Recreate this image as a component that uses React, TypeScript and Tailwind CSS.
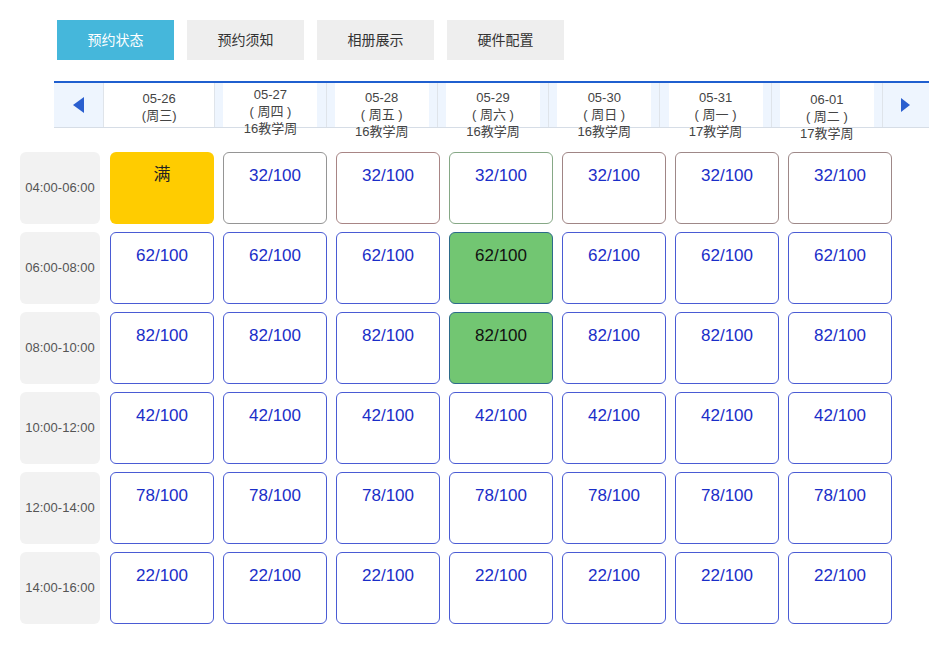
import { clsx } from "clsx";

const font = "font-['Liberation_Sans','Noto_Sans_CJK_SC',sans-serif]";

const tabs = ["预约状态", "预约须知", "相册展示", "硬件配置"];

const days = [
  { date: "05-26", wk: "(周三)", week: "", top: "pt-[7px]", full: true },
  { date: "05-27", wk: "( 周四 )", week: "16教学周", top: "pt-[3px]" },
  { date: "05-28", wk: "( 周五 )", week: "16教学周", top: "pt-[6px]" },
  { date: "05-29", wk: "( 周六 )", week: "16教学周", top: "pt-[6px]" },
  { date: "05-30", wk: "( 周日 )", week: "16教学周", top: "pt-[6px]" },
  { date: "05-31", wk: "( 周一 )", week: "17教学周", top: "pt-[6px]" },
  { date: "06-01", wk: "( 周二 )", week: "17教学周", top: "pt-[8px]" },
];

const slots = [
  { time: "04:00-06:00", n: 32 },
  { time: "06:00-08:00", n: 62 },
  { time: "08:00-10:00", n: 82 },
  { time: "10:00-12:00", n: 42 },
  { time: "12:00-14:00", n: 78 },
  { time: "14:00-16:00", n: 22 },
];

// 首行边框偏灰/偏红，其余蓝
const firstRowBorders = [
  "",
  "border-[#959595]",
  "border-[#a88585]",
  "border-[#86a886]",
  "border-[#a08585]",
  "border-[#9e8888]",
  "border-[#9e8888]",
];

function SlotCell({ row, col, n }: { row: number; col: number; n: number }) {
  if (row === 0 && col === 0) {
    return (
      <div className="h-[72px] rounded-[6px] bg-[#ffcc00] pt-[13px] text-center text-[17px] leading-[20px] text-[#222]">
        满
      </div>
    );
  }
  const picked = col === 3 && (row === 1 || row === 2);
  return (
    <div
      className={clsx(
        "h-[72px] rounded-[6px] border pt-[13px] text-center text-[17px] leading-[20px]",
        picked && "bg-[#72c672] border-[#2d6a8a] text-[#111]",
        !picked && row === 0 && firstRowBorders[col],
        !picked && row === 0 && "bg-white text-[#1a2ec8]",
        !picked && row > 0 && "bg-white border-[#4a5bd4] text-[#1a2ec8]",
      )}
    >
      {n}/100
    </div>
  );
}

export default function App() {
  return (
    <div className={clsx("w-[949px] h-[647px] bg-white relative", font)}>
      <div className="flex gap-[13px] pl-[57px] pt-[20px]">
        {tabs.map((t, i) => (
          <div
            key={t}
            className={clsx(
              "w-[117px] h-[40px] flex items-center justify-center text-[14px]",
              i === 0 ? "bg-[#45b7db] text-white" : "bg-[#eeeeee] text-[#333]",
            )}
          >
            {t}
          </div>
        ))}
      </div>

      <div className="ml-[54px] mt-[21px] w-[875px] border-t-2 border-[#1f5fcf]">
        <div className="flex h-[45px] bg-[#eef5fe] border-b border-[#d6dde6]">
          <div className="w-[49px] flex items-center justify-center">
            <svg width="11" height="16" viewBox="0 0 11 16">
              <path d="M11 0 L0 8 L11 16 Z" fill="#2a5fcf" />
            </svg>
          </div>
          {days.map((d) => (
            <div
              key={d.date}
              className="flex-1 border-l border-[#dfe4ea] flex justify-center"
            >
              <div
                className={clsx(
                  "bg-white text-center text-[13px] leading-[17px] text-[#444] h-[44px] whitespace-nowrap",
                  d.full ? "w-full" : "w-[94px]",
                  d.top,
                )}
              >
                <div>{d.date}</div>
                <div>{d.wk}</div>
                {d.week && <div>{d.week}</div>}
              </div>
            </div>
          ))}
          <div className="w-[47px] border-l border-[#dfe4ea] flex items-center justify-center">
            <svg width="9" height="14" viewBox="0 0 9 14">
              <path d="M0 0 L9 7 L0 14 Z" fill="#2a5fcf" />
            </svg>
          </div>
        </div>
      </div>

      <div className="mt-[24px] ml-[20px] flex flex-col gap-[8px]">
        {slots.map((s, r) => (
          <div key={s.time} className="flex gap-[10px]">
            <div className="w-[80px] h-[72px] rounded-[6px] bg-[#f2f2f2] flex items-center justify-center text-[13px] text-[#555]">
              {s.time}
            </div>
            <div className="grid grid-cols-[repeat(7,104px)] gap-[9px]">
              {days.map((d, c) => (
                <SlotCell key={d.date} row={r} col={c} n={s.n} />
              ))}
            </div>
          </div>
        ))}
      </div>
    </div>
  );
}
